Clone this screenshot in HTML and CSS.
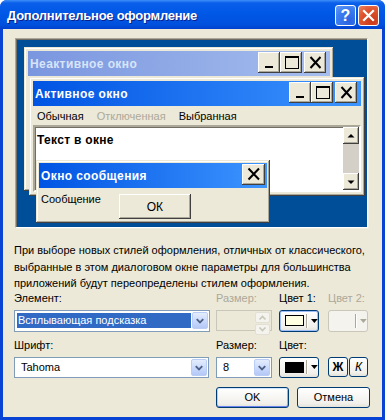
FILE: index.html
```html
<!DOCTYPE html>
<html lang="ru">
<head>
  <meta charset="UTF-8" />
  <title>Дополнительное оформление</title>
  <link rel="stylesheet" href="styles.css">
</head>
<body>

  <div class="window">
    <div class="titlebar">
      <span class="title">Дополнительное оформление</span>
      <div class="caption-buttons">
        <span class="cap-btn help">?</span>
        <span class="cap-btn close">
          <svg width="19" height="19" viewBox="0 0 19 19"><path d="M5 5L14 14M14 5L5 14" stroke="#fff" stroke-width="2.2" stroke-linecap="square"/></svg>
        </span>
      </div>
    </div>

    <div class="client">
      <!-- preview of the windows -->
      <div class="preview">
        <div class="pw inactive">
          <div class="pw-title">
            <span>Неактивное окно</span>
            <div class="pw-buttons">
              <span class="cbtn"><svg width="21" height="20" viewBox="0 0 21 20"><rect x="6" y="13" width="8" height="2"/></svg></span>
              <span class="cbtn"><svg width="21" height="20" viewBox="0 0 21 20"><rect x="4.5" y="3.5" width="13" height="12" fill="none" stroke="#000"/><rect x="4" y="3" width="14" height="2"/></svg></span>
              <span class="cbtn gap"><svg width="21" height="20" viewBox="0 0 21 20"><path d="M5.5 4L15.5 15M15.5 4L5.5 15" stroke="#000" stroke-width="2"/></svg></span>
            </div>
          </div>
        </div>

        <div class="pw active">
          <div class="pw-title">
            <span>Активное окно</span>
            <div class="pw-buttons">
              <span class="cbtn"><svg width="21" height="20" viewBox="0 0 21 20"><rect x="6" y="13" width="8" height="2"/></svg></span>
              <span class="cbtn"><svg width="21" height="20" viewBox="0 0 21 20"><rect x="4.5" y="3.5" width="13" height="12" fill="none" stroke="#000"/><rect x="4" y="3" width="14" height="2"/></svg></span>
              <span class="cbtn gap"><svg width="21" height="20" viewBox="0 0 21 20"><path d="M5.5 4L15.5 15M15.5 4L5.5 15" stroke="#000" stroke-width="2"/></svg></span>
            </div>
          </div>
          <div class="pw-menu">
            <span>Обычная</span>
            <span class="disabled">Отключенная</span>
            <span>Выбранная</span>
          </div>
          <div class="pw-body">
            <div class="pw-text">Текст в окне</div>
            <div class="scrollbar">
              <span class="sb-btn"><svg width="14" height="14" viewBox="0 0 14 14"><path d="M7 5L10.5 8.5H3.5z"/></svg></span>
              <span class="sb-track"></span>
              <span class="sb-btn"><svg width="14" height="14" viewBox="0 0 14 14"><path d="M3.5 5.5H10.5L7 9z"/></svg></span>
            </div>
          </div>
        </div>

        <div class="pw msgbox">
          <div class="pw-title">
            <span>Окно сообщения</span>
            <div class="pw-buttons">
              <span class="cbtn big"><svg width="22" height="21" viewBox="0 0 22 21"><path d="M5.5 4.5L16 15.5M16 4.5L5.5 15.5" stroke="#000" stroke-width="2"/></svg></span>
            </div>
          </div>
          <div class="msg-body">
            <span class="msg-text">Сообщение</span>
            <span class="classic-btn">ОК</span>
          </div>
        </div>
      </div>

      <p class="note">При выборе новых стилей оформления, отличных от классического, выбранные в этом диалоговом окне параметры для большинства приложений будут переопределены стилем оформления.</p>

      <div class="fields">
        <div class="field">
          <label>Элемент:</label>
          <div class="combo">
            <span class="combo-value selected">Всплывающая подсказка</span>
            <span class="drop"><svg width="15" height="15" viewBox="0 0 15 15"><path d="M4 6L7.5 9.5L11 6" fill="none" stroke="#4D6185" stroke-width="2"/></svg></span>
          </div>
        </div>
        <div class="field">
          <label class="disabled">Размер:</label>
          <div class="spin">
            <span class="spin-buttons">
              <span><svg width="13" height="9" viewBox="0 0 13 9"><path d="M3.5 6.5L6.5 3.5L9.5 6.5" fill="none" stroke="#C9C7BA" stroke-width="1.6"/></svg></span>
              <span><svg width="13" height="9" viewBox="0 0 13 9"><path d="M3.5 2.5L6.5 5.5L9.5 2.5" fill="none" stroke="#C9C7BA" stroke-width="1.6"/></svg></span>
            </span>
          </div>
        </div>
        <div class="field">
          <label>Цвет 1:</label>
          <div class="color-btn focused">
            <span class="swatch light"></span>
            <span class="sep"></span>
            <svg width="7" height="4" viewBox="0 0 7 4"><path d="M0 0H7L3.5 4z"/></svg>
          </div>
        </div>
        <div class="field">
          <label class="disabled">Цвет 2:</label>
          <div class="color-btn off">
            <span class="swatch none"></span>
            <span class="sep"></span>
            <svg width="7" height="4" viewBox="0 0 7 4"><path d="M0 0H7L3.5 4z" fill="#ACA899"/></svg>
          </div>
        </div>

        <div class="field">
          <label>Шрифт:</label>
          <div class="combo short">
            <span class="combo-value">Tahoma</span>
            <span class="drop"><svg width="15" height="15" viewBox="0 0 15 15"><path d="M4 6L7.5 9.5L11 6" fill="none" stroke="#4D6185" stroke-width="2"/></svg></span>
          </div>
        </div>
        <div class="field">
          <label>Размер:</label>
          <div class="combo short size">
            <span class="combo-value">8</span>
            <span class="drop"><svg width="15" height="15" viewBox="0 0 15 15"><path d="M4 6L7.5 9.5L11 6" fill="none" stroke="#4D6185" stroke-width="2"/></svg></span>
          </div>
        </div>
        <div class="field">
          <label>Цвет:</label>
          <div class="color-btn short">
            <span class="swatch dark"></span>
            <span class="sep"></span>
            <svg width="7" height="4" viewBox="0 0 7 4"><path d="M0 0H7L3.5 4z"/></svg>
          </div>
        </div>
        <div class="field">
          <label>&nbsp;</label>
          <div class="style-btns">
            <span class="xp-btn small bold">Ж</span>
            <span class="xp-btn small italic">К</span>
          </div>
        </div>
      </div>

      <div class="actions">
        <span class="xp-btn default">OK</span>
        <span class="xp-btn">Отмена</span>
      </div>
    </div>
  </div>

</body>
</html>
```

FILE: styles.css
```css
body {
  margin: 0;
  background-color: #fff;
  font-family: 'Liberation Sans', Arial, sans-serif;
  font-size: 11px;
  color: #000;
}

.window {
  width: 385px;
  height: 420px;
  box-sizing: border-box;
  display: flex;
  flex-direction: column;
  background-color: #0843D4;
  border-radius: 7px 7px 0 0;
  padding-bottom: 3px;
  overflow: hidden;
}

/* Title bar */
.titlebar {
  height: 29px;
  flex: none;
  display: flex;
  align-items: center;
  justify-content: space-between;
  padding: 0 6px 0 7px;
  background: linear-gradient(to bottom, #3D8EF8 0, #0A5FEA 3px, #0058E6 45%, #0050DD 85%, #0040CE 100%);
}

.title {
  color: #fff;
  font-size: 13px;
  font-weight: bold;
  letter-spacing: -0.25px;
  text-shadow: 1px 1px 0 #0A1E8A;
  margin-top: 2px;
}

.caption-buttons {
  display: flex;
  gap: 2px;
  margin-top: 2px;
}

.cap-btn {
  width: 21px;
  height: 21px;
  box-sizing: border-box;
  border: 1px solid #fff;
  border-radius: 3px;
  display: flex;
  align-items: center;
  justify-content: center;
}

.cap-btn.help {
  background: radial-gradient(circle at 70% 80%, #2A62E0, #3C7DF0 60%, #6A9CF5);
  color: #fff;
  font-size: 16px;
  font-weight: bold;
}

.cap-btn.close {
  background: radial-gradient(circle at 70% 80%, #C8381A, #E0552F 60%, #EE8566);
}

/* Client area */
.client {
  flex: 1;
  margin: 0 3px;
  background-color: #ECE9D8;
  display: flex;
  flex-direction: column;
}

/* Preview */
.preview {
  position: relative;
  margin: 9px 0 0 12px;
  width: 351px;
  height: 188px;
  background-color: #004E98;
  border: 1px solid;
  border-color: #ACA899 #fff #fff #ACA899;
  box-shadow: inset 1px 1px 0 #716F64, 1px 1px 0 #F1EFE2;
}

.pw {
  position: absolute;
  box-sizing: border-box;
  padding: 4px;
  background-color: #ECE9D8;
  box-shadow: inset -1px -1px 0 #404040, inset 1px 1px 0 #ECE9D8, inset -2px -2px 0 #ACA899, inset 2px 2px 0 #fff;
  display: flex;
  flex-direction: column;
}

.pw.inactive { left: 8px; top: 8px; width: 310px; height: 144px; }
.pw.active { left: 13px; top: 38px; width: 336px; height: 119px; }
.pw.msgbox { left: 20px; top: 121px; width: 234px; height: 63px; padding: 3px; }

.pw-title {
  height: 25px;
  flex: none;
  display: flex;
  align-items: center;
  justify-content: space-between;
  padding-left: 2px;
  color: #fff;
  font-size: 12px;
  font-weight: bold;
  letter-spacing: 0.4px;
  background: linear-gradient(to right, #0054E3, #3D95FF);
}

.inactive .pw-title {
  color: #D8E4F8;
  background: linear-gradient(to right, #7A96DF, #A6BEEE);
}

.pw-buttons {
  display: flex;
  align-self: flex-start;
  margin: 1px 4px 0 0;
}

.msgbox .pw-buttons { margin-right: 2px; }

.cbtn {
  width: 22px;
  height: 21px;
  box-sizing: border-box;
  display: flex;
  align-items: center;
  justify-content: center;
  background-color: #ECE9D8;
  box-shadow: inset -1px -1px 0 #404040, inset 1px 1px 0 #fff, inset -2px -2px 0 #ACA899;
}

.cbtn.gap { margin-left: 2px; }
.cbtn.big { width: 23px; }

.pw-menu {
  height: 19px;
  flex: none;
  display: flex;
  align-items: center;
  gap: 13px;
  padding-left: 4px;
}

.disabled { color: #ACA899; }

.pw-body {
  flex: 1;
  display: flex;
  background-color: #fff;
  border: 2px solid;
  border-color: #ACA899 #fff #fff #ACA899;
  box-shadow: inset 1px 1px 0 #716F64;
}

.pw-text {
  flex: 1;
  padding: 6px 0 0 2px;
  font-size: 12px;
  font-weight: bold;
  letter-spacing: 0.3px;
}

.scrollbar {
  width: 16px;
  display: flex;
  flex-direction: column;
}

.sb-btn {
  height: 17px;
  flex: none;
  display: flex;
  align-items: center;
  justify-content: center;
  background-color: #ECE9D8;
  box-shadow: inset -1px -1px 0 #404040, inset 1px 1px 0 #fff, inset -2px -2px 0 #ACA899;
}

.sb-track {
  flex: 1;
  background-color: #D4D0C8;
}

.msg-body {
  flex: 1;
  display: flex;
  align-items: flex-start;
  gap: 18px;
  padding: 3px 0 0 2px;
}

.msg-text {
  margin-top: 2px;
}

.classic-btn {
  width: 72px;
  height: 25px;
  margin-top: 3px;
  box-sizing: border-box;
  display: flex;
  align-items: center;
  justify-content: center;
  font-size: 12px;
  box-shadow: inset -1px -1px 0 #404040, inset 1px 1px 0 #fff, inset -2px -2px 0 #ACA899;
}

/* Description */
.note {
  margin: 14px 8px 0 11px;
  line-height: 16.5px;
}

/* Controls */
.fields {
  display: grid;
  grid-template-columns: 202px 63px 49px 40px;
  row-gap: 7px;
  margin: 0 0 0 11px;
}

.field {
  display: flex;
  flex-direction: column;
  gap: 5px;
}

.field label {
  height: 13px;
  line-height: 13px;
}

.combo {
  width: 196px;
  height: 22px;
  box-sizing: border-box;
  border: 1px solid #7F9DB9;
  background-color: #fff;
  display: flex;
  align-items: center;
  padding: 2px 1px 2px 2px;
}

.combo.short { height: 21px; width: 195px; }
.combo.size { width: 56px; }

.combo-value {
  flex: 1;
  height: 15px;
  line-height: 15px;
  padding-left: 4px;
}

.combo-value.selected {
  background-color: #316AC5;
  color: #fff;
  padding-left: 1px;
  margin-right: 1px;
}

.drop {
  width: 16px;
  height: 17px;
  box-sizing: border-box;
  border: 1px solid #B9CDF6;
  border-radius: 2px;
  background: linear-gradient(to bottom, #E4EDFD, #C6D7FC 60%, #B4C8F6);
  display: flex;
  align-items: center;
  justify-content: center;
}

.spin {
  width: 56px;
  height: 21px;
  box-sizing: border-box;
  border: 1px solid #C9C7BA;
  display: flex;
  justify-content: flex-end;
  padding: 1px;
}

.spin-buttons {
  width: 15px;
  display: flex;
  flex-direction: column;
  gap: 1px;
}

.spin-buttons span {
  flex: 1;
  display: flex;
  align-items: center;
  justify-content: center;
  border: 1px solid #E2E0D4;
  border-radius: 2px;
  background-color: #F4F3EE;
}

.color-btn {
  width: 40px;
  height: 22px;
  box-sizing: border-box;
  border: 1px solid #003C74;
  border-radius: 3px;
  background: linear-gradient(to bottom, #fff, #F1F0EB 80%, #E3E2DA);
  display: flex;
  align-items: center;
  padding-left: 5px;
}

.color-btn.short { height: 21px; }

.color-btn.focused {
  box-shadow: inset 0 0 0 1px #9DBEF9;
}

.color-btn.off {
  border-color: #C9C7BA;
  background: #F4F3EE;
}

.swatch {
  width: 20px;
  height: 11px;
  box-sizing: border-box;
  border: 1px solid #000;
}

.swatch.light { background-color: #FFFFE1; }
.swatch.dark { background-color: #000; }
.swatch.none { border: 0; }

.sep {
  width: 1px;
  height: 14px;
  margin: 0 4px 0 2px;
  background-color: #ACA899;
  box-shadow: 1px 0 0 #fff;
}

.style-btns {
  display: flex;
  gap: 1px;
}

.xp-btn {
  height: 21px;
  box-sizing: border-box;
  border: 1px solid #003C74;
  border-radius: 3px;
  background: linear-gradient(to bottom, #fff, #F1F0EB 80%, #E3E2DA);
  display: flex;
  align-items: center;
  justify-content: center;
  width: 73px;
}

.xp-btn.small {
  width: 20px;
  height: 20px;
  font-size: 12px;
}

.xp-btn.bold { font-weight: bold; }
.xp-btn.italic { font-style: italic; width: 19px; }

.xp-btn.default {
  box-shadow: inset 0 1px 0 #CEE7FF, inset 0 -1px 0 #6982EE, inset 1px 0 0 #B4CCF9, inset -1px 0 0 #8CB4F2;
}

.actions {
  display: flex;
  justify-content: flex-end;
  gap: 8px;
  margin: 9px 12px 0 0;
}
```
